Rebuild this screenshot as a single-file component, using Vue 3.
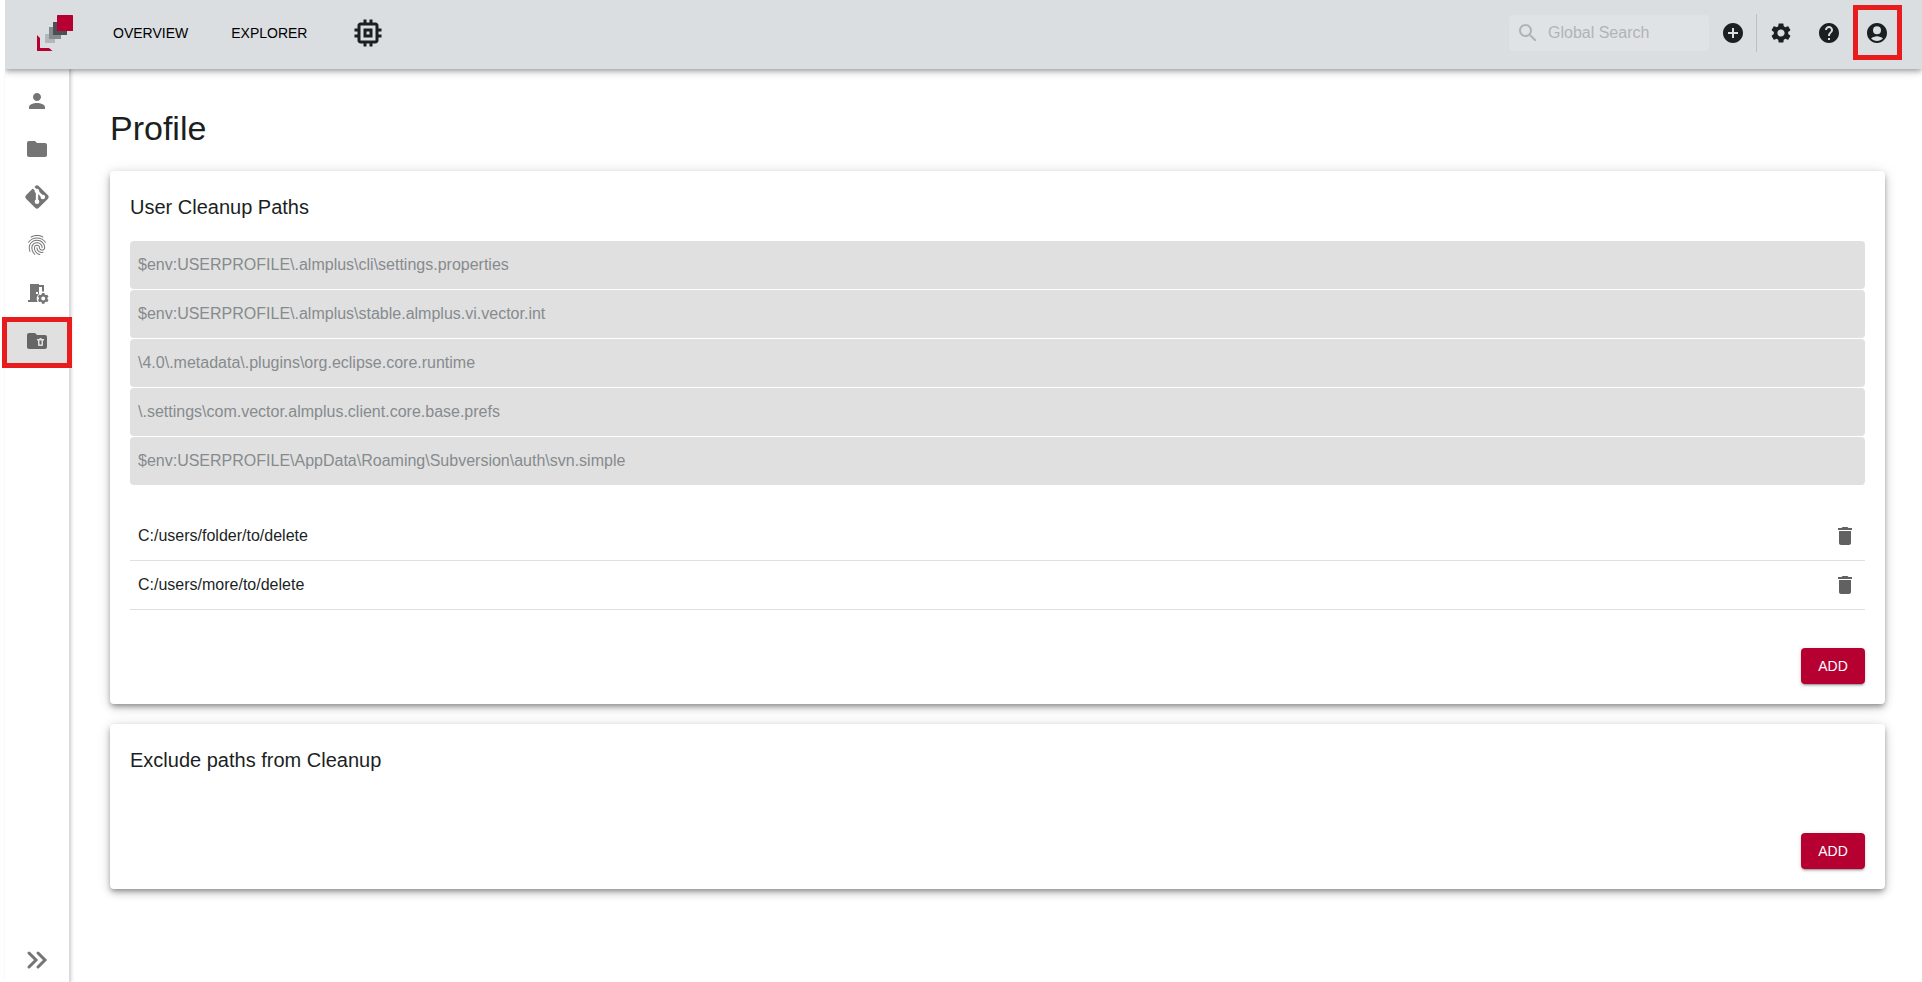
<template>
  <div class="app">
    <header class="topbar">
      <a href="#" class="logo" aria-label="Home">
        <svg width="36" height="36" viewBox="0 0 36 36">
          <rect x="8" y="19" width="10" height="9" fill="#b2b7ba" />
          <rect x="12" y="12" width="12" height="12" fill="#858b8f" />
          <rect x="16" y="7" width="14" height="13" fill="#4b5054" />
          <rect x="20" y="0" width="16" height="16" rx="0.6" fill="#b70032" />
          <path d="M0 20l3 3v10h9l3.500 3H0z" fill="#b70032" />
        </svg>
      </a>
      <nav class="main-nav">
        <a href="#">OVERVIEW</a>
        <a href="#">EXPLORER</a>
        <a href="#" aria-label="Devices">
          <svg width="36" height="36" viewBox="0 0 24 24"><path :d="icons.chip" /></svg>
        </a>
      </nav>
      <label class="search">
        <svg width="24" height="24" viewBox="0 0 24 24"><path :d="icons.search" /></svg>
        <input v-model="query" type="text" placeholder="Global Search" aria-label="Global Search" />
      </label>
      <div class="actions">
        <button
          v-for="action in actions"
          :key="action.icon"
          type="button"
          :class="{ divided: action.divided, marked: action.marked }"
          :aria-label="action.label"
        >
          <svg width="24" height="24" viewBox="0 0 24 24"><path :d="icons[action.icon]" /></svg>
        </button>
      </div>
    </header>

    <div class="body">
      <aside class="sidebar">
        <a
          v-for="entry in sections"
          :key="entry.icon"
          href="#"
          class="side-item"
          :class="{ selected: entry.icon === current }"
          :aria-label="entry.label"
        >
          <svg :width="entry.size || 24" :height="entry.size || 24" viewBox="0 0 24 24">
            <path :d="icons[entry.icon]" fill-rule="evenodd" />
          </svg>
        </a>
        <button type="button" class="expand" aria-label="Expand">
          <svg width="24" height="24" viewBox="0 0 24 24">
            <path d="M4 5l7 7-7 7M13 5l7 7-7 7" />
          </svg>
        </button>
      </aside>

      <main class="content">
        <h1>Profile</h1>

        <section class="card">
          <h2>User Cleanup Paths</h2>
          <ul class="fixed-paths">
            <li v-for="path in fixedPaths" :key="path">{{ path }}</li>
          </ul>
          <ul class="user-paths">
            <li v-for="(path, i) in userPaths" :key="path">
              <span>{{ path }}</span>
              <button type="button" aria-label="Delete" @click="userPaths.splice(i, 1)">
                <svg width="24" height="24" viewBox="0 0 24 24"><path :d="icons.trash" /></svg>
              </button>
            </li>
          </ul>
          <div class="card-actions">
            <button type="button" class="add">ADD</button>
          </div>
        </section>

        <section class="card">
          <h2>Exclude paths from Cleanup</h2>
          <div class="card-actions empty">
            <button type="button" class="add">ADD</button>
          </div>
        </section>
      </main>
    </div>
  </div>
</template>

<script setup>
import { ref } from 'vue'

const query = ref('')
const current = ref('folderTrash')

const actions = [
  { icon: 'plus', label: 'Add' },
  { icon: 'gear', label: 'Settings', divided: true },
  { icon: 'help', label: 'Help' },
  { icon: 'account', label: 'Account', marked: true }
]

const sections = [
  { icon: 'person', label: 'User' },
  { icon: 'folder', label: 'Folders' },
  { icon: 'git', label: 'Git', size: 28 },
  { icon: 'fingerprint', label: 'Credentials' },
  { icon: 'door', label: 'Access' },
  { icon: 'folderTrash', label: 'Cleanup' }
]

const fixedPaths = [
  '$env:USERPROFILE\\.almplus\\cli\\settings.properties',
  '$env:USERPROFILE\\.almplus\\stable.almplus.vi.vector.int',
  '\\4.0\\.metadata\\.plugins\\org.eclipse.core.runtime',
  '\\.settings\\com.vector.almplus.client.core.base.prefs',
  '$env:USERPROFILE\\AppData\\Roaming\\Subversion\\auth\\svn.simple'
]

const userPaths = ref(['C:/users/folder/to/delete', 'C:/users/more/to/delete'])

const icons = {
  chip: 'M15 9H9v6h6V9zm-2 4h-2v-2h2v2zm8-2V9h-2V7c0-1.100-.9-2-2-2h-2V3h-2v2h-2V3H9v2H7c-1.100 0-2 .9-2 2v2H3v2h2v2H3v2h2v2c0 1.100.9 2 2 2h2v2h2v-2h2v2h2v-2h2c1.100 0 2-.9 2-2v-2h2v-2h-2v-2h2zm-4 6H7V7h10v10z',
  search: 'M15.500 14h-.79l-.28-.27C15.410 12.590 16 11.110 16 9.500 16 5.910 13.090 3 9.500 3S3 5.910 3 9.500 5.910 16 9.500 16c1.610 0 3.090-.59 4.230-1.570l.27.28v.79l5 4.990L20.490 19l-4.990-5zm-6 0C7.010 14 5 11.990 5 9.500S7.010 5 9.500 5 14 7.010 14 9.500 11.990 14 9.500 14z',
  plus: 'M12 2C6.480 2 2 6.480 2 12s4.480 10 10 10 10-4.480 10-10S17.520 2 12 2zm5 11h-4v4h-2v-4H7v-2h4V7h2v4h4v2z',
  gear: 'M19.140 12.940c.04-.3.06-.61.06-.94 0-.32-.02-.64-.07-.94l2.030-1.580c.18-.14.23-.41.12-.61l-1.920-3.320c-.12-.22-.37-.29-.59-.22l-2.390.96c-.5-.38-1.030-.7-1.620-.94l-.36-2.540c-.04-.24-.24-.41-.48-.41h-3.840c-.24 0-.43.17-.47.41l-.36 2.540c-.59.24-1.130.57-1.620.94l-2.390-.96c-.22-.08-.47 0-.59.22L2.740 8.870c-.12.21-.08.47.12.61l2.030 1.580c-.05.3-.09.63-.09.94s.02.64.07.94l-2.030 1.580c-.18.14-.23.41-.12.61l1.920 3.320c.12.22.37.29.59.22l2.390-.96c.5.38 1.030.7 1.620.94l.36 2.540c.05.24.24.41.48.41h3.840c.24 0 .44-.17.47-.41l.36-2.540c.59-.24 1.130-.56 1.620-.94l2.390.96c.22.08.47 0 .59-.22l1.920-3.320c.12-.22.07-.47-.12-.61l-2.010-1.580zM12 15.600c-1.980 0-3.600-1.620-3.600-3.600s1.620-3.600 3.600-3.600 3.600 1.620 3.600 3.600-1.620 3.600-3.600 3.600z',
  help: 'M12 2C6.480 2 2 6.480 2 12s4.480 10 10 10 10-4.480 10-10S17.520 2 12 2zm1 17h-2v-2h2v2zm2.070-7.750l-.9.920C13.450 12.900 13 13.500 13 15h-2v-.5c0-1.100.45-2.100 1.170-2.830l1.240-1.260c.37-.36.59-.86.59-1.410 0-1.100-.9-2-2-2s-2 .9-2 2H8c0-2.210 1.790-4 4-4s4 1.790 4 4c0 .88-.36 1.680-.93 2.250z',
  account: 'M12 2C6.480 2 2 6.480 2 12s4.480 10 10 10 10-4.480 10-10S17.520 2 12 2zM12 5.200a4 4 0 1 1 0 8 4 4 0 0 1 0-8zM12 20c-2.300 0-4.400-.95-5.900-2.480C7.300 16.100 9.800 15.200 12 15.200s4.700.9 5.900 2.320C16.400 19.050 14.300 20 12 20z',
  person: 'M12 12c2.210 0 4-1.790 4-4s-1.790-4-4-4-4 1.790-4 4 1.790 4 4 4zm0 2c-2.670 0-8 1.340-8 4v2h16v-2c0-2.660-5.330-4-8-4z',
  folder: 'M10 4H4c-1.100 0-1.990.9-1.990 2L2 18c0 1.100.9 2 2 2h16c1.100 0 2-.9 2-2V8c0-1.100-.9-2-2-2h-8l-2-2z',
  git: 'M2.600 10.590L8.380 4.800l1.690 1.700c-.24.85.15 1.780.93 2.230v5.540c-.6.34-1 .99-1 1.730a2 2 0 0 0 4 0c0-.74-.4-1.390-1-1.730V9.410l2.070 2.090c-.07.15-.07.32-.07.5a2 2 0 1 0 2-2c-.18 0-.35 0-.5.07L13.930 7.500c.26-.93-.22-1.950-1.150-2.340-.43-.16-.88-.2-1.280-.09L9.800 3.380l.79-.78c.78-.79 2.040-.79 2.820 0l7.990 7.990c.79.78.79 2.040 0 2.820l-7.990 7.990c-.78.79-2.040.79-2.820 0L2.600 13.410c-.79-.78-.79-2.040 0-2.820z',
  fingerprint: 'M17.810 4.470c-.08 0-.16-.02-.23-.06C15.660 3.420 14 3 12.010 3c-1.980 0-3.860.47-5.570 1.410-.24.13-.54.04-.68-.2-.13-.24-.04-.55.2-.68C7.820 2.520 9.860 2 12.010 2c2.130 0 3.990.47 6.030 1.520.25.13.34.43.21.67-.09.18-.26.28-.44.28zM3.500 9.720c-.1 0-.2-.03-.29-.09-.23-.16-.28-.47-.12-.7.99-1.400 2.250-2.500 3.750-3.270C9.980 4.040 14 4.030 17.150 5.650c1.500.77 2.760 1.860 3.750 3.250.16.22.11.54-.12.7-.23.16-.54.11-.7-.12-.9-1.260-2.040-2.250-3.390-2.940-2.870-1.470-6.540-1.470-9.400.01-1.360.7-2.500 1.700-3.400 2.960-.08.14-.23.21-.39.21zm6.250 12.070c-.13 0-.26-.05-.35-.15-.87-.87-1.340-1.430-2.010-2.640-.69-1.230-1.050-2.730-1.050-4.340 0-2.970 2.540-5.390 5.660-5.390s5.660 2.420 5.660 5.390c0 .28-.22.5-.5.5s-.5-.22-.5-.5c0-2.420-2.090-4.390-4.660-4.390-2.570 0-4.660 1.970-4.660 4.390 0 1.440.32 2.770.93 3.850.64 1.150 1.080 1.640 1.850 2.420.19.2.19.51 0 .71-.11.1-.24.15-.37.15zm7.170-1.850c-1.190 0-2.240-.3-3.100-.89-1.490-1.010-2.380-2.650-2.380-4.390 0-.28.22-.5.5-.5s.5.22.5.5c0 1.410.72 2.740 1.940 3.560.71.48 1.540.71 2.540.71.24 0 .64-.03 1.040-.1.27-.05.53.13.58.41.05.27-.13.53-.41.58-.57.11-1.070.12-1.210.12zM14.910 22c-.04 0-.09-.01-.13-.02-1.590-.44-2.630-1.030-3.720-2.100-1.400-1.390-2.170-3.240-2.170-5.220 0-1.620 1.380-2.940 3.080-2.940 1.700 0 3.080 1.320 3.080 2.940 0 1.070.93 1.940 2.080 1.940s2.080-.87 2.080-1.940c0-3.770-3.250-6.830-7.250-6.830-2.840 0-5.440 1.580-6.610 4.030-.39.81-.59 1.760-.59 2.800 0 .78.07 2.010.67 3.610.1.26-.03.55-.29.64-.26.1-.55-.04-.64-.29-.49-1.310-.73-2.610-.73-3.960 0-1.200.23-2.290.68-3.240 1.330-2.790 4.280-4.600 7.510-4.600 4.550 0 8.250 3.510 8.250 7.830 0 1.620-1.380 2.940-3.080 2.940s-3.080-1.320-3.080-2.940c0-1.070-.93-1.940-2.080-1.940s-2.080.87-2.080 1.940c0 1.710.66 3.310 1.870 4.510.95.94 1.860 1.460 3.270 1.850.27.07.42.35.35.61-.05.23-.26.38-.47.38z',
  door: 'M5 3h9v1h5v6.500h-2V6h-3v7a6.500 6.500 0 0 0-1.300 8H3v-2h2zM11 11v2h2v-2zM17 12h2.400l.4 1.500 1 .6 1.500-.4 1.200 2-1.100 1.100v1.200l1.100 1.100-1.200 2-1.500-.4-1 .6-.4 1.500H17l-.4-1.500-1-.6-1.500.4-1.200-2L14 18v-1.200l-1.100-1.100 1.200-2 1.500.4 1-.6zM18.200 15.400a2 2 0 1 0 0 4 2 2 0 0 0 0-4z',
  folderTrash: 'M10 4H4c-1.100 0-1.990.9-1.990 2L2 18c0 1.100.9 2 2 2h16c1.100 0 2-.9 2-2V8c0-1.100-.9-2-2-2h-8zM12 10h2.500V9h2v1H19v1.500h-1V16a1 1 0 0 1-1 1h-3a1 1 0 0 1-1-1v-4.500h-1zM14.500 11.500v4h2v-4z',
  trash: 'M6 19c0 1.100.9 2 2 2h8c1.100 0 2-.9 2-2V7H6v12zM19 4h-3.500l-1-1h-5l-1 1H5v2h14V4z'
}
</script>

<style>
body {
  background: #fff;
}
</style>

<style scoped>
.app {
  display: flex;
  flex-direction: column;
  min-height: 100vh;
  margin-left: 5px;
  font-family: "Liberation Sans", Arial, sans-serif;
  font-size: 16px;
  line-height: 24px;
  color: #1c1f1f;
}
.app * { box-sizing: border-box; }
svg { display: block; fill: currentColor; }
a { color: inherit; text-decoration: none; }
button {
  padding: 0;
  border: 0;
  background: none;
  color: inherit;
  font: inherit;
  cursor: pointer;
}
ul { margin: 0; padding: 0; list-style: none; }

.topbar {
  position: relative;
  z-index: 1;
  display: flex;
  align-items: center;
  height: 69px;
  padding: 0 21px 3px 32px;
  background: #dadee1;
  box-shadow: 0 2px 4px -1px rgba(0, 0, 0, .2), 0 4px 5px rgba(0, 0, 0, .14), 0 1px 10px rgba(0, 0, 0, .12);
  clip-path: inset(0 0 -20px 0);
}
.logo { margin-right: 40px; }
.main-nav {
  display: flex;
  align-items: center;
  gap: 43px;
  font-size: 14px;
  color: #000;
}
.main-nav svg { color: #1c1f1f; }
.search {
  display: flex;
  align-items: center;
  gap: 8px;
  width: 200px;
  height: 36px;
  margin-left: auto;
  padding: 0 7px;
  border-radius: 4px;
  background: #dfe3e6;
  color: #b0b4b6;
}
.search svg { flex: none; }
.search input {
  flex: 1;
  min-width: 0;
  padding: 0;
  border: 0;
  outline: 0;
  background: none;
  font: inherit;
  color: #1c1f1f;
}
.search input::placeholder { color: #b0b4b6; opacity: 1; }
.actions { display: flex; }
.actions button {
  position: relative;
  display: flex;
  align-items: center;
  justify-content: center;
  width: 48px;
  height: 38px;
}
.actions .divided { box-shadow: -1px 0 #bcc0c3; }

/* red frames around the entries to click */
.marked::after,
.selected::after {
  content: "";
  position: absolute;
  border: 5px solid #e81c1c;
}
.marked::after { inset: -9px -1px -8px 0; }
.selected::after { inset: 0 -3px -3px; }

.body { display: flex; flex: 1; }
.sidebar {
  display: flex;
  flex-direction: column;
  flex: none;
  width: 66px;
  padding-top: 8px;
  border-right: 2px solid #dcdcdc;
  box-shadow: 1px 0 3px rgba(0, 0, 0, .12);
  color: #757575;
}
.side-item {
  position: relative;
  display: flex;
  align-items: center;
  justify-content: center;
  height: 48px;
}
.side-item.selected { background: #e0e0e0; color: #666; }
.expand {
  display: flex;
  align-items: center;
  justify-content: center;
  height: 44px;
  margin-top: auto;
}
.expand path {
  fill: none;
  stroke: currentColor;
  stroke-width: 3;
  stroke-linecap: round;
}

.content {
  flex: 1;
  min-width: 0;
  padding: 39px 37px 40px 39px;
}
h1 {
  margin: 0 0 23px;
  font-size: 34px;
  font-weight: 400;
  line-height: 40px;
}
.card {
  padding: 20px;
  border-radius: 4px;
  background: #fff;
  box-shadow: 0 3px 5px -1px rgba(0, 0, 0, .3), 0 4px 8px rgba(0, 0, 0, .16), 0 1px 14px rgba(0, 0, 0, .12);
}
.card + .card { margin-top: 20px; }
h2 {
  margin: 0;
  font-size: 20px;
  font-weight: 400;
  line-height: 32px;
}
.fixed-paths {
  display: grid;
  gap: 1px;
  margin-top: 18px;
}
.fixed-paths li {
  padding: 12px 8px;
  border-radius: 4px;
  background: #e0e0e0;
  color: #868b8e;
}
.user-paths { margin-top: 27px; }
.user-paths li {
  display: flex;
  align-items: center;
  justify-content: space-between;
  height: 49px;
  padding: 0 8px;
  border-bottom: 1px solid #e0e0e0;
}
.user-paths button { color: #616161; }
.card-actions {
  display: flex;
  justify-content: flex-end;
  margin-top: 38px;
}
.card-actions.empty { margin-top: 57px; }
.add {
  width: 64px;
  height: 36px;
  border-radius: 4px;
  background: #b70032;
  box-shadow: 0 3px 1px -2px rgba(0, 0, 0, .2), 0 2px 2px rgba(0, 0, 0, .14), 0 1px 5px rgba(0, 0, 0, .12);
  color: #fff;
  font-size: 14px;
}
</style>
